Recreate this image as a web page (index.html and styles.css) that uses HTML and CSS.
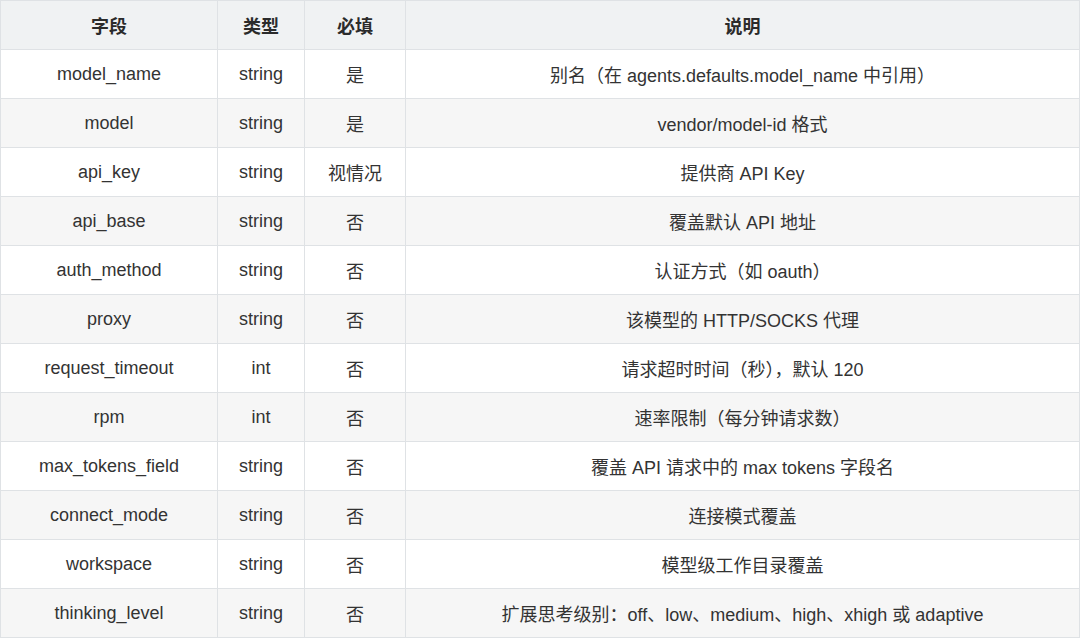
FILE: index.html
```html
<!DOCTYPE html>
<html lang="zh">
<head>
<meta charset="utf-8">
<link rel="stylesheet" href="styles.css">
</head>
<body>
<table class="spec">
  <colgroup>
    <col class="c1"><col class="c2"><col class="c3"><col class="c4">
  </colgroup>
  <thead>
    <tr><th>字段</th><th>类型</th><th>必填</th><th>说明</th></tr>
  </thead>
  <tbody>
    <tr><td>model_name</td><td>string</td><td>是</td><td>别名（在 agents.defaults.model_name 中引用）</td></tr>
    <tr><td>model</td><td>string</td><td>是</td><td>vendor/model-id 格式</td></tr>
    <tr><td>api_key</td><td>string</td><td>视情况</td><td>提供商 API Key</td></tr>
    <tr><td>api_base</td><td>string</td><td>否</td><td>覆盖默认 API 地址</td></tr>
    <tr><td>auth_method</td><td>string</td><td>否</td><td>认证方式（如 oauth）</td></tr>
    <tr><td>proxy</td><td>string</td><td>否</td><td>该模型的 HTTP/SOCKS 代理</td></tr>
    <tr><td>request_timeout</td><td>int</td><td>否</td><td>请求超时时间（秒），默认 120</td></tr>
    <tr><td>rpm</td><td>int</td><td>否</td><td>速率限制（每分钟请求数）</td></tr>
    <tr><td>max_tokens_field</td><td>string</td><td>否</td><td>覆盖 API 请求中的 max tokens 字段名</td></tr>
    <tr><td>connect_mode</td><td>string</td><td>否</td><td>连接模式覆盖</td></tr>
    <tr><td>workspace</td><td>string</td><td>否</td><td>模型级工作目录覆盖</td></tr>
    <tr><td>thinking_level</td><td>string</td><td>否</td><td>扩展思考级别：off、low、medium、high、xhigh 或 adaptive</td></tr>
  </tbody>
</table>
</body>
</html>
```
FILE: styles.css
```css
html, body {
  margin: 0;
  padding: 0;
  background: #ffffff;
}
.spec {
  width: 1080px;
  border-collapse: collapse;
  table-layout: fixed;
  font-family: "Liberation Sans", Arial, "Noto Sans CJK SC", sans-serif;
  font-size: 18px;
  color: #333333;
}
.c1 { width: 217px; }
.c2 { width: 87px; }
.c3 { width: 101px; }
.c4 { width: auto; }
.spec th, .spec td {
  border: 1px solid #dfe2e5;
  height: 49px;
  padding: 0 6px;
  text-align: center;
  vertical-align: middle;
  box-sizing: border-box;
}
.spec th {
  background: #f0f2f3;
  font-weight: bold;
  color: #2b2b2b;
}
.spec tbody tr:nth-child(even) td {
  background: #f6f6f6;
}
```
